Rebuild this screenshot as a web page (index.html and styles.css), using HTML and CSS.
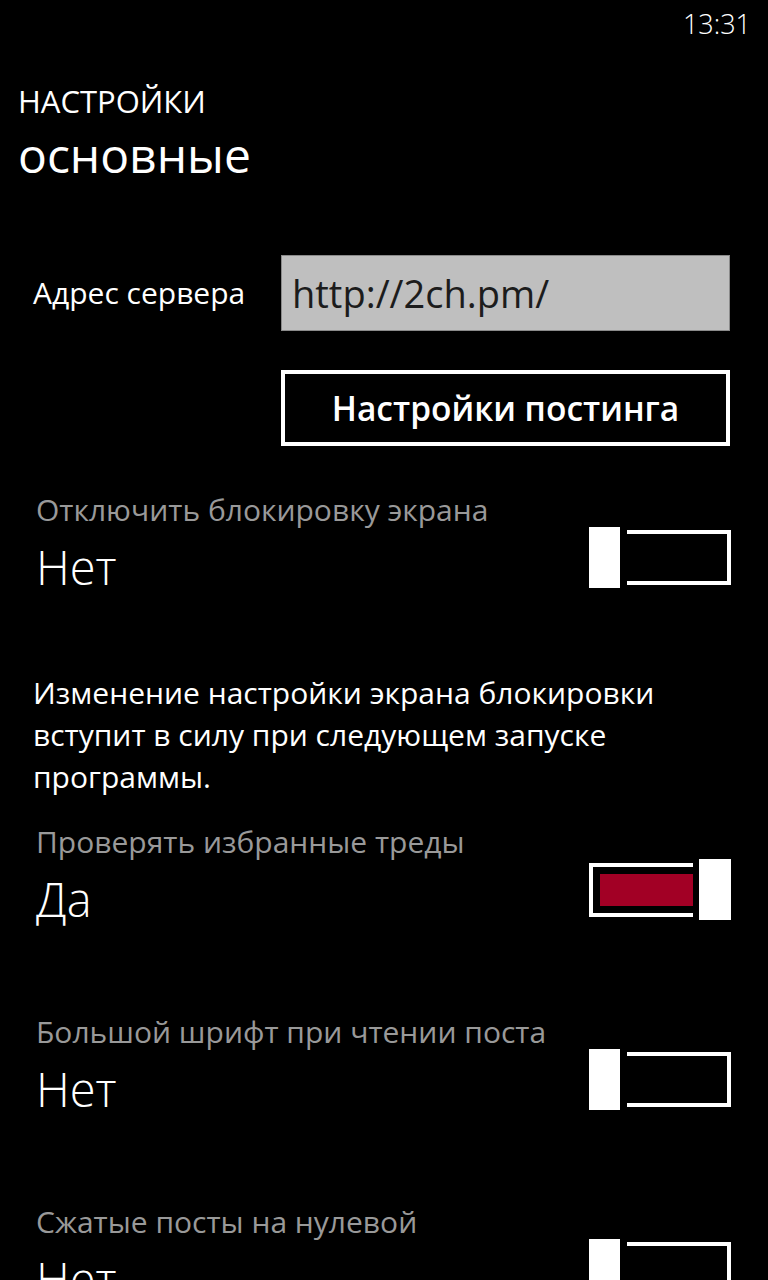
FILE: index.html
```html
<!DOCTYPE html>
<html lang="ru">
<head>
<meta charset="utf-8">
<title>Настройки — основные</title>
<link rel="stylesheet" href="styles.css">
</head>
<body>
<div class="status"><span class="time">13:31</span></div>
<header class="head">
  <div class="app-title">НАСТРОЙКИ</div>
  <div class="page-title">основные</div>
</header>
<main class="content">
  <div class="server-row">
    <span class="server-label">Адрес сервера</span>
    <div class="textbox">http://2ch.pm/</div>
  </div>
  <div class="btn-row">
    <button class="btn">Настройки постинга</button>
  </div>

  <section class="toggle-item">
    <div class="toggle-text">
      <div class="toggle-label">Отключить блокировку экрана</div>
      <div class="toggle-value">Нет</div>
    </div>
    <div class="switch off"><span class="thumb"></span><span class="track"></span></div>
  </section>

  <p class="note">Изменение настройки экрана блокировки вступит в силу при следующем запуске программы.</p>

  <section class="toggle-item">
    <div class="toggle-text">
      <div class="toggle-label">Проверять избранные треды</div>
      <div class="toggle-value">Да</div>
    </div>
    <div class="switch on"><span class="track"><span class="fill"></span></span><span class="thumb"></span></div>
  </section>

  <section class="toggle-item">
    <div class="toggle-text">
      <div class="toggle-label">Большой шрифт при чтении поста</div>
      <div class="toggle-value">Нет</div>
    </div>
    <div class="switch off"><span class="thumb"></span><span class="track"></span></div>
  </section>

  <section class="toggle-item">
    <div class="toggle-text">
      <div class="toggle-label">Сжатые посты на нулевой</div>
      <div class="toggle-value">Нет</div>
    </div>
    <div class="switch off"><span class="thumb"></span><span class="track"></span></div>
  </section>
</main>
</body>
</html>
```
FILE: styles.css
```css
* { box-sizing: border-box; }

html, body {
  margin: 0;
  padding: 0;
  background: #000;
  color: #fff;
  font-family: "Open Sans", "Noto Sans", sans-serif;
}

body {
  height: 1280px;
  overflow: hidden;
}

.status {
  display: flex;
  justify-content: flex-end;
  padding: 4px 17px 0 0;
  height: 44px;
}

.time {
  font-size: 27px;
  line-height: 40px;
  font-weight: 300;
}

.head {
  margin-top: 37px;
  padding-left: 18px;
}

.app-title {
  font-size: 31px;
  line-height: 40px;
}

.page-title {
  margin-top: 6px;
  font-size: 48px;
  line-height: 56px;
}

.content {
  padding: 0 38px 0 33px;
}

.server-row {
  margin-top: 72px;
  display: grid;
  grid-template-columns: 248px 1fr;
  align-items: center;
}

.server-label {
  font-size: 30px;
  line-height: 40px;
}

.textbox {
  height: 76px;
  background: #bfbfbf;
  border: 1px solid #8a8a8a;
  color: #1c1c1c;
  font-size: 38px;
  line-height: 74px;
  padding-left: 10px;
}

.btn-row {
  margin-top: 39px;
  padding-left: 248px;
}

.btn {
  display: block;
  width: 100%;
  height: 76px;
  background: #000;
  border: 4px solid #fff;
  color: #fff;
  font-family: "Open Sans", "Noto Sans", sans-serif;
  font-weight: 600;
  font-size: 33.5px;
  padding: 0;
}

.toggle-item {
  display: grid;
  grid-template-columns: 1fr auto;
  align-items: start;
  margin-left: 3px;
  margin-right: -1px;
  height: 190px;
}

.toggle-item:first-of-type { margin-top: 47px; }

.toggle-label {
  font-size: 30px;
  line-height: 34px;
  color: #999;
}

.toggle-value {
  margin-top: 10px;
  font-size: 47px;
  line-height: 60px;
  font-weight: 300;
}

.switch {
  margin-top: 34px;
  width: 142px;
  height: 61px;
  display: flex;
  align-items: center;
}

.thumb {
  display: block;
  height: 61px;
  background: #fff;
}

.track {
  display: block;
  width: 104px;
  height: 55px;
  border: 4px solid #fff;
}

.switch.off .thumb { width: 31px; margin-right: 7px; }
.switch.off .track { border-left: none; }

.switch.on .track {
  height: 54px;
  border-right: none;
  padding: 7px 0 7px 7px;
}
.switch.on .fill {
  display: block;
  height: 100%;
  background: #a20025;
}
.switch.on .thumb { width: 32px; margin-left: 6px; }

.note {
  margin: -11px 0 0 0;
  font-size: 30px;
  line-height: 42px;
  height: 153px;
}
```
